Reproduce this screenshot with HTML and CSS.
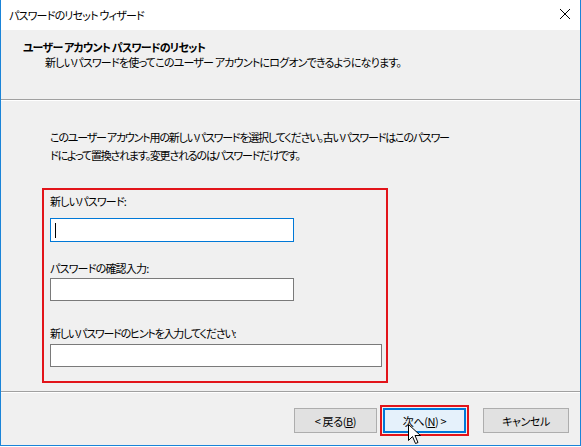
FILE: index.html
```html
<!DOCTYPE html>
<html lang="ja">
<head>
<meta charset="utf-8">
<link rel="stylesheet" href="styles.css">
</head>
<body>
<div class="window">
  <div class="titlebar">
    <span class="title">パスワードのリセット ウィザード</span>
    <svg class="close" width="12" height="12" viewBox="0 0 12 12"><path d="M1 1 L11 11 M11 1 L1 11" stroke="#000" stroke-width="1" fill="none"/></svg>
  </div>
  <div class="header">
    <div class="h-title">ユーザー アカウント パスワードのリセット</div>
    <div class="h-sub">新しいパスワードを使ってこのユーザー アカウントにログオンできるようになります。</div>
  </div>
  <div class="content">
    <p class="intro">このユーザー アカウント用の新しいパスワードを選択してください。古いパスワードはこのパスワー<br>ドによって置換されます。変更されるのはパスワードだけです。</p>
    <div class="fields">
      <div class="label l1">新しいパスワード:</div>
      <div class="field f1 focused"><span class="caret"></span></div>
      <div class="label l2">パスワードの確認入力:</div>
      <div class="field f2"></div>
      <div class="label l3">新しいパスワードのヒントを入力してください:</div>
      <div class="field f3"></div>
    </div>
  </div>
  <div class="footer">
    <div class="btn">&lt;&nbsp;戻る(<u>B</u>)</div>
    <div class="btn-hl"><div class="btn primary">次へ(<u>N</u>)&nbsp;&gt;</div></div>
    <div class="btn cancel">キャンセル</div>
  </div>
  <svg class="pointer" width="14" height="22" viewBox="0 0 14 22"><path d="M0.5 0.5 L0.5 16.5 L4.5 12.5 L7.5 19.5 L10 18.5 L7 11.5 L12.5 11.5 Z" fill="#fff" stroke="#000" stroke-width="1" stroke-linejoin="miter"/></svg>
</div>
</body>
</html>
```
FILE: styles.css
```css
* { box-sizing: border-box; }
html, body { margin: 0; padding: 0; background: #fff; }
body {
  font-family: "Noto Sans CJK JP", "Noto Sans", sans-serif;
  font-size: 11px;
  letter-spacing: -0.8px;
  font-feature-settings: "palt";
  color: #000;
}
.window {
  position: relative;
  width: 581px;
  height: 446px;
  border-left: 1px solid #1a84d8;
  border-right: 1px solid #1a84d8;
  border-bottom: 1px solid #1a84d8;
  background: #f0f0f0;
  display: flex;
  flex-direction: column;
  overflow: hidden;
}
.titlebar {
  height: 30px;
  background: #fff;
  display: flex;
  align-items: center;
  padding-left: 8px;
  padding-right: 8px;
  justify-content: space-between;
  line-height: 14px;
}
.close { margin-right: 1px; margin-top: -2px; }
.header {
  height: 70px;
  background: #f0f0f0;
  border-bottom: 1px solid #a0a0a0;
  box-shadow: 0 1px 0 #fff;
  padding-top: 10px;
  line-height: 15px;
}
.h-title { font-weight: bold; padding-left: 22px; }
.h-sub { padding-left: 44px; }
.content {
  height: 292px;
  padding-left: 41px;
  border-bottom: 1px solid #a0a0a0;
}
.intro {
  margin: 28px 0 0 8px;
  line-height: 18px;
  letter-spacing: -1.2px;
}
.fields {
  margin-top: 24px;
  width: 346px;
  height: 195px;
  border: 2px solid #e2141a;
  padding: 3px 0 0 6px;
}
.label { line-height: 16px; }
.field {
  background: #fff;
  border: 1px solid #7a7a7a;
  height: 23px;
  position: relative;
}
.focused { border-color: #0078d7; }
.l1 { margin: 0; }
.f1 { margin-top: 9px; width: 244px; height: 24px; }
.l2 { margin-top: 18px; }
.f2 { margin-top: 2px; width: 244px; }
.l3 { margin-top: 24px; letter-spacing: -1.2px; }
.f3 { margin-top: 3px; width: 332px; }
.caret {
  position: absolute;
  left: 4px;
  top: 4px;
  width: 1px;
  height: 15px;
  background: #000;
}
.footer {
  flex: 1;
  border-top: 1px solid #fff;
  display: flex;
  align-items: flex-start;
  padding-top: 15px;
  padding-left: 293px;
}
.btn {
  width: 83px;
  height: 25px;
  background: #e1e1e1;
  border: 1px solid #adadad;
  display: flex;
  align-items: center;
  justify-content: center;
  line-height: 16px;
  letter-spacing: -0.4px;
}
.btn-hl {
  margin-left: 3px;
  margin-top: -3px;
  padding: 1px;
  border: 2px solid #e2141a;
}
.btn.primary {
  background: #e5f1fb;
  border: 2px solid #0078d7;
}
.cancel { margin-left: 14px; width: 86px; }
.pointer {
  position: absolute;
  left: 407px;
  top: 424px;
}
```
